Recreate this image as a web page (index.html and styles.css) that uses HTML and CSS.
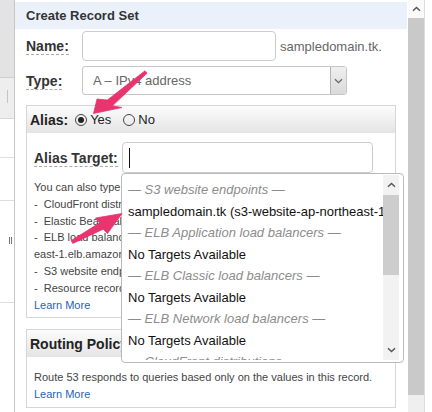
FILE: index.html
```html
<!DOCTYPE html>
<html lang="en">
<head>
    <meta charset="UTF-8">
    <meta name="viewport" content="width=device-width, initial-scale=1.0">
    <title>Create Record Set</title>
    <link rel="stylesheet" href="styles.css">
</head>
<body>
    <div class="frame">
        <div class="side">
            <div class="side-top"></div>
            <div class="side-tab"><span class="tick"></span></div>
            <div class="side-row r1"></div>
            <div class="side-row r2"></div>
            <div class="side-row r3"><span class="grip"></span></div>
        </div>

        <div class="main">
            <div class="panel-head">Create Record Set</div>

            <div class="field row-name">
                <label class="lbl"><span>Name:</span></label>
                <div class="input name-input"></div>
                <span class="suffix">sampledomain.tk.</span>
            </div>

            <div class="field row-type">
                <label class="lbl"><span>Type:</span></label>
                <div class="select">
                    <span class="select-text">A – IPv4 address</span>
                    <span class="select-btn">
                        <svg width="9" height="6" viewBox="0 0 9 6"><polyline points="1,1.2 4.5,4.6 8,1.2" fill="none" stroke="#666" stroke-width="1.3"/></svg>
                    </span>
                </div>
            </div>

            <div class="box alias-box">
                <div class="box-head">
                    <span class="box-title">Alias:</span>
                    <span class="radio checked"></span><span class="opt">Yes</span>
                    <span class="radio"></span><span class="opt">No</span>
                </div>
                <div class="box-body">
                    <div class="row-target">
                        <label class="lbl wide"><span>Alias Target:</span></label>
                        <div class="input target-input">
                            <span class="caret"></span>

                            <div class="dropdown">
                                <div class="dd-list">
                                    <div class="dd-group">— S3 website endpoints —</div>
                                    <div class="dd-item">sampledomain.tk (s3-website-ap-northeast-1.amazonaws.com)</div>
                                    <div class="dd-group">— ELB Application load balancers —</div>
                                    <div class="dd-item">No Targets Available</div>
                                    <div class="dd-group">— ELB Classic load balancers —</div>
                                    <div class="dd-item">No Targets Available</div>
                                    <div class="dd-group">— ELB Network load balancers —</div>
                                    <div class="dd-item">No Targets Available</div>
                                    <div class="dd-group">— CloudFront distributions —</div>
                                </div>
                                <div class="dd-scroll">
                                    <div class="sb-btn">
                                        <svg width="9" height="6" viewBox="0 0 9 6"><polyline points="1,4.8 4.5,1.4 8,4.8" fill="none" stroke="#555" stroke-width="1.4"/></svg>
                                    </div>
                                    <div class="dd-thumb"></div>
                                    <div class="dd-track">
                                        <div class="sb-btn">
                                            <svg width="9" height="6" viewBox="0 0 9 6"><polyline points="1,1.2 4.5,4.6 8,1.2" fill="none" stroke="#555" stroke-width="1.4"/></svg>
                                        </div>
                                    </div>
                                </div>
                            </div>
                        </div>
                    </div>

                    <div class="help">
                        <div>You can also type the domain name for the resource. Examples:</div>
                        <div>-&nbsp;&nbsp;CloudFront distribution domain name: d111111abcdef8.cloudfront.net</div>
                        <div>-&nbsp;&nbsp;Elastic Beanstalk environment CNAME: example.elasticbeanstalk.com</div>
                        <div>-&nbsp;&nbsp;ELB load balancer DNS name: example-1.us-</div>
                        <div>east-1.elb.amazonaws.com</div>
                        <div>-&nbsp;&nbsp;S3 website endpoint: s3-website.us-east-2.amazonaws.com</div>
                        <div>-&nbsp;&nbsp;Resource record set in this hosted zone: www.example.com</div>
                        <div><a class="learn" href="#">Learn More</a></div>
                    </div>
                </div>
            </div>

            <div class="box routing-box">
                <div class="box-head">
                    <span class="box-title">Routing Policy:</span>
                </div>
                <div class="box-body routing-body">
                    <div class="help">
                        <div>Route 53 responds to queries based only on the values in this record.</div>
                        <div><a class="learn" href="#">Learn More</a></div>
                    </div>
                </div>
            </div>
        </div>

        <div class="scrollbar">
            <div class="sb-btn top">
                <svg width="9" height="6" viewBox="0 0 9 6"><polyline points="1,4.8 4.5,1.4 8,4.8" fill="none" stroke="#555" stroke-width="1.4"/></svg>
            </div>
            <div class="sb-thumb"></div>
            <div class="sb-track"></div>
        </div>
        <div class="edge"></div>
    </div>

    <!-- callout arrows drawn over the form -->
    <svg class="arrows" width="432" height="412" viewBox="0 0 432 412">
        <polygon points="145,70.8 107.4,100 97,99 93.5,113.5 122,107.5 112.4,105.8 147,73.2" />
        <polygon points="71.2,240.6 99.8,222.8 95.5,218 122,213.5 107.5,233.5 103.2,229.2 72.8,243.4" />
    </svg>
</body>
</html>
```

FILE: styles.css
```css
* {
    margin: 0;
    padding: 0;
    box-sizing: border-box;
}

body {
    font-family: "Liberation Sans", Arial, sans-serif;
    color: #333;
    background: #fff;
    width: 432px;
    height: 412px;
    overflow: hidden;
    position: relative;
}

.frame {
    display: flex;
    height: 412px;
    overflow: hidden;
}

/* left pane sliver */
.side {
    width: 15px;
    border-right: 1px solid #c6c6c6;
    display: flex;
    flex-direction: column;
}

.side-top {
    height: 78px;
    background: #e3e3e3;
    border-bottom: 1px solid #cfcfcf;
}

.side-tab {
    height: 41px;
    background: #eeeeee;
    border-bottom: 1px solid #d8d8d8;
    padding: 12px 0 0 7px;
}

.tick {
    display: block;
    width: 1px;
    height: 13px;
    background: #c4c4c4;
}

.side-row {
    border-bottom: 1px solid #dedede;
}

.r1 { height: 39px; }
.r2 { height: 43px; }
.r3 {
    height: 102px;
    padding: 36px 0 0 9px;
}

.grip {
    display: block;
    width: 3px;
    height: 7px;
    border-left: 1px solid #777;
    border-right: 1px solid #777;
}

/* main panel */
.main {
    width: 392px;
    position: relative;
}

.panel-head {
    margin-top: 2px;
    height: 27px;
    line-height: 28px;
    padding-left: 11px;
    background: #eaf1fb;
    font-size: 13px;
    font-weight: bold;
    color: #333;
}

.field {
    display: flex;
    align-items: center;
    padding-left: 11px;
}

.row-name { margin-top: 2px; }
.row-type { margin-top: 5px; }

.lbl {
    width: 56px;
    flex: none;
    font-size: 14px;
    font-weight: bold;
    color: #333;
}

.lbl span {
    border-bottom: 1px dashed #aaa;
}

.lbl.wide { width: 88px; }

.input {
    height: 30px;
    border: 1px solid #ccc;
    border-radius: 4px;
    background: #fff;
}

.name-input { width: 194px; }

.suffix {
    margin-left: 4px;
    font-size: 13px;
    color: #666;
}

.select {
    width: 265px;
    height: 29px;
    display: flex;
    border: 1px solid #c5c5c5;
    border-radius: 3px;
}

.select-text {
    flex: 1;
    padding-left: 10px;
    font-size: 13px;
    line-height: 27px;
    color: #666;
}

.select-btn {
    width: 16px;
    display: flex;
    align-items: center;
    justify-content: center;
    border-left: 1px solid #b5b5b5;
    border-radius: 0 2px 2px 0;
    background: linear-gradient(#f0f0f0, #dadada);
}

/* section boxes */
.box {
    margin-left: 11px;
    width: 370px;
    border: 1px solid #d6d6d6;
}

.alias-box { margin-top: 10px; }
.routing-box { margin-top: 11px; }

.box-head {
    height: 27px;
    display: flex;
    align-items: center;
    padding-left: 3px;
    background: linear-gradient(#fcfcfc, #e4e4e4);
    font-size: 13px;
    color: #222;
}

.box-title {
    font-size: 14px;
    font-weight: bold;
    margin-right: 7px;
}

.radio {
    width: 12px;
    height: 12px;
    margin-right: 3px;
    border: 1px solid #444;
    border-radius: 50%;
    display: flex;
    align-items: center;
    justify-content: center;
}

.radio.checked::after {
    content: "";
    width: 6px;
    height: 6px;
    border-radius: 50%;
    background: #222;
}

.opt { margin-right: 12px; }

.box-body {
    padding: 9px 7px 4px 7px;
}

.routing-body { padding-top: 12px; }

.row-target {
    display: flex;
    align-items: center;
}

.target-input {
    width: 251px;
    height: 31px;
    position: relative;
    display: flex;
    align-items: center;
    padding-left: 6px;
}

.caret {
    width: 1px;
    height: 20px;
    background: #111;
}

.help {
    margin-top: 6px;
    font-size: 11px;
    line-height: 16.8px;
    color: #444;
}

.routing-body .help { margin-top: 0; }

.help div {
    white-space: nowrap;
    overflow: hidden;
}

.learn {
    color: #1f64b3;
    text-decoration: none;
}

/* alias target suggestions */
.dropdown {
    position: absolute;
    top: calc(100% + 1px);
    left: -2px;
    width: 283px;
    height: 190px;
    display: flex;
    border: 1px solid #b9b9b9;
    border-radius: 4px;
    background: #fff;
    z-index: 5;
}

.dd-list {
    flex: 1;
    height: 186px;
    overflow: hidden;
    padding: 5px 0 0 6px;
    font-size: 13px;
    line-height: 21.5px;
    color: #111;
    white-space: nowrap;
}

.dd-group {
    font-style: italic;
    color: #8c8c8c;
}

.dd-scroll {
    width: 16px;
    margin: 1px 4px 2px 0;
    display: flex;
    flex-direction: column;
}

.sb-btn {
    height: 20px;
    display: flex;
    align-items: center;
    justify-content: center;
    background: #f2f2f2;
}

.dd-thumb {
    height: 80px;
    background: #cdcdcd;
}

.dd-track {
    flex: 1;
    display: flex;
    flex-direction: column;
    justify-content: flex-end;
    background: #f2f2f2;
}

/* window scrollbar */
.scrollbar {
    width: 16px;
    margin-left: 1px;
    display: flex;
    flex-direction: column;
}

.sb-btn.top {
    height: 18px;
    background: #fafafa;
}

.sb-thumb {
    height: 377px;
    background: #c9c9c9;
}

.sb-track {
    flex: 1;
    background: #efefef;
}

.edge {
    flex: 1;
    border-left: 1px solid #dcdcdc;
}

.arrows {
    position: absolute;
    top: 0;
    left: 0;
    z-index: 10;
    pointer-events: none;
    fill: #e8356f;
    stroke: #e8356f;
    stroke-width: 0.8;
    stroke-linejoin: round;
}
```
